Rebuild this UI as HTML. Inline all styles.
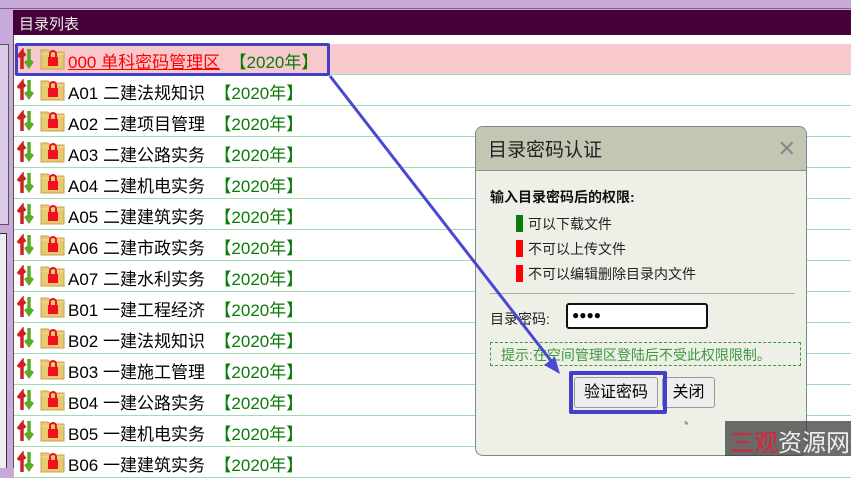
<!DOCTYPE html>
<html><head><meta charset="utf-8"><style>
*{margin:0;padding:0;box-sizing:border-box}
body{width:851px;height:468px;overflow:hidden;background:#c9a9d9;font-family:"Liberation Sans","Noto Sans CJK SC",sans-serif;position:relative}
.abs{position:absolute}
.list{position:absolute;left:14px;top:44px;width:837px}
.row{position:relative;width:837px;height:31px;border-bottom:1px solid #9fdcb4;background:#fff}
.row .ic{position:absolute;left:3px;top:4px}
.row .t{position:absolute;left:54px;top:4px;font-size:17px;color:#000;white-space:nowrap}
.row .y{color:#0a7a0a}
</style></head><body>
<svg width="0" height="0" style="position:absolute"><defs><g id="ic"><path d="M5 21V4L1 9M5 4l3 4" stroke="#d02020" stroke-width="3.5" fill="none"/><path d="M12 1v16M8.5 13l3.5 5 3.5-5" stroke="#5aaa28" stroke-width="3.5" fill="none"/><path d="M24 2h7l2 2h14v17H24z" fill="#e8c870" stroke="#c8a050"/><path d="M24 6h23" stroke="#f4dc98"/><rect x="31" y="9" width="10" height="9" fill="#f01020"/><path d="M33 9V6a3 3 0 0 1 6 0v3" stroke="#f01020" stroke-width="2" fill="none"/></g></defs></svg>
<div class="abs" style="left:0;top:0;width:851px;height:9px;background:#c9a9d9;border-bottom:1px solid #7a6a80"></div>
<div class="abs" style="left:0;top:44px;width:9px;height:181px;background:#dccbe8;border:1px solid #555;border-left:none"></div>
<div class="abs" style="left:0;top:233px;width:7px;height:235px;background:#eee;border:1px solid #333;border-left:none;border-bottom:none"></div>
<div class="abs" style="left:13px;top:10px;width:838px;height:25px;background:#46003a;color:#eee;font-size:15px;padding:3px 0 0 6px">目录列表</div>
<div class="abs" style="left:13px;top:35px;width:838px;height:433px;background:#fff;border-left:1px solid #555"></div>
<div class="list">
<div class="row" style="background:#f7c9cc"><svg class="ic" width="50" height="22"><use href="#ic"/></svg><div class="t"><span style="color:#f00;text-decoration:underline">000 单科密码管理区</span> &nbsp;<span class="y">【2020年】</span></div></div>
<div class="row"><svg class="ic" width="50" height="22"><use href="#ic"/></svg><div class="t">A01 二建法规知识 &nbsp;<span class="y">【2020年】</span></div></div>
<div class="row"><svg class="ic" width="50" height="22"><use href="#ic"/></svg><div class="t">A02 二建项目管理 &nbsp;<span class="y">【2020年】</span></div></div>
<div class="row"><svg class="ic" width="50" height="22"><use href="#ic"/></svg><div class="t">A03 二建公路实务 &nbsp;<span class="y">【2020年】</span></div></div>
<div class="row"><svg class="ic" width="50" height="22"><use href="#ic"/></svg><div class="t">A04 二建机电实务 &nbsp;<span class="y">【2020年】</span></div></div>
<div class="row"><svg class="ic" width="50" height="22"><use href="#ic"/></svg><div class="t">A05 二建建筑实务 &nbsp;<span class="y">【2020年】</span></div></div>
<div class="row"><svg class="ic" width="50" height="22"><use href="#ic"/></svg><div class="t">A06 二建市政实务 &nbsp;<span class="y">【2020年】</span></div></div>
<div class="row"><svg class="ic" width="50" height="22"><use href="#ic"/></svg><div class="t">A07 二建水利实务 &nbsp;<span class="y">【2020年】</span></div></div>
<div class="row"><svg class="ic" width="50" height="22"><use href="#ic"/></svg><div class="t">B01 一建工程经济 &nbsp;<span class="y">【2020年】</span></div></div>
<div class="row"><svg class="ic" width="50" height="22"><use href="#ic"/></svg><div class="t">B02 一建法规知识 &nbsp;<span class="y">【2020年】</span></div></div>
<div class="row"><svg class="ic" width="50" height="22"><use href="#ic"/></svg><div class="t">B03 一建施工管理 &nbsp;<span class="y">【2020年】</span></div></div>
<div class="row"><svg class="ic" width="50" height="22"><use href="#ic"/></svg><div class="t">B04 一建公路实务 &nbsp;<span class="y">【2020年】</span></div></div>
<div class="row"><svg class="ic" width="50" height="22"><use href="#ic"/></svg><div class="t">B05 一建机电实务 &nbsp;<span class="y">【2020年】</span></div></div>
<div class="row"><svg class="ic" width="50" height="22"><use href="#ic"/></svg><div class="t">B06 一建建筑实务 &nbsp;<span class="y">【2020年】</span></div></div>
</div>
<div class="abs" style="left:15px;top:43px;width:315px;height:33px;border:3px solid #4040c8;border-radius:2px"></div>
<div class="abs" style="left:475px;top:126px;width:332px;height:330px;background:#eef0e8;border:1px solid #7a8890;border-radius:8px;overflow:hidden">
<div style="height:44px;background:#c3c6b3;border-bottom:1px solid #8a9088;font-size:19px;padding:8px 0 0 12px;color:#222">目录密码认证<span style="position:absolute;right:10px;top:11px;color:#888;font-size:22px;line-height:22px">✕</span></div>
<div style="position:absolute;left:14px;top:60px;font-size:14px;font-weight:bold;color:#111">输入目录密码后的权限:</div>
<div style="position:absolute;left:40px;top:85px;font-size:14px;line-height:25px;color:#222">
<div><span style="display:inline-block;width:7px;height:17px;background:#0a7a0a;vertical-align:-3px;margin-right:5px"></span>可以下载文件</div>
<div><span style="display:inline-block;width:7px;height:17px;background:#f00;vertical-align:-3px;margin-right:5px"></span>不可以上传文件</div>
<div><span style="display:inline-block;width:7px;height:17px;background:#f00;vertical-align:-3px;margin-right:5px"></span>不可以编辑删除目录内文件</div></div>
<div style="position:absolute;left:14px;top:166px;width:305px;border-top:1px solid #aaa"></div>
<div style="position:absolute;left:14px;top:182px;font-size:14px;color:#222">目录密码:</div>
<div style="position:absolute;left:90px;top:176px;width:142px;height:26px;border:2px solid #111;border-radius:3px;background:#fff;font-size:12px;padding:3px 4px">●●●●</div>
<div style="position:absolute;left:14px;top:215px;width:311px;height:24px;border:1px dashed #3a9a3a;color:#3a9a3a;font-size:14px;padding:2px 0 0 10px">提示:在空间管理区登陆后不受此权限限制。</div>
<div style="position:absolute;left:98px;top:250px;width:84px;height:31px;border:1px solid #999;border-radius:3px;background:#eee;font-size:16px;text-align:center;line-height:29px">验证密码</div>
<div style="position:absolute;left:186px;top:250px;width:53px;height:31px;border:1px solid #999;border-radius:3px;background:#eee;font-size:16px;text-align:center;line-height:29px">关闭</div>
<div style="position:absolute;left:93px;top:244px;width:98px;height:43px;border:4px solid #4040c8;border-radius:2px"></div>
</div>
<svg class="abs" style="left:0;top:0" width="851" height="468"><line x1="330" y1="76" x2="552" y2="362" stroke="#4848d0" stroke-width="3"/><path d="M560 374l-16-9 11-8z" fill="#4848d0"/></svg>
<div class="abs" style="left:725px;top:421px;width:126px;height:35px;background:rgba(60,60,60,.75);color:#eee;font-size:24px;padding:2px 0 0 5px"><span style="color:#e0203a">三观</span>资源网</div>
<div class="abs" style="left:680px;top:416px;font-size:16px;color:#999">◔</div>
</body></html>
